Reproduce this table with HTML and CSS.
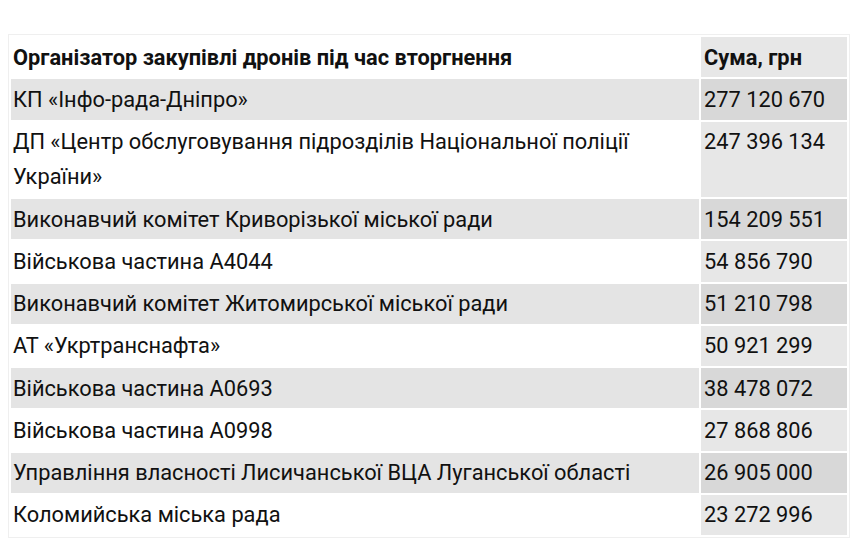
FILE: index.html
```html
<!DOCTYPE html>
<html lang="uk">
<head>
<meta charset="utf-8">
<link rel="stylesheet" href="styles.css">
</head>
<body>
<table class="tbl">
  <thead>
    <tr><th class="c1">Організатор закупівлі дронів під час вторгнення</th><th class="c2">Сума, грн</th></tr>
  </thead>
  <tbody>
    <tr><td class="c1">КП «Інфо-рада-Дніпро»</td><td class="c2">277 120 670</td></tr>
    <tr><td class="c1">ДП «Центр обслуговування підрозділів Національної поліції України»</td><td class="c2">247 396 134</td></tr>
    <tr><td class="c1">Виконавчий комітет Криворізької міської ради</td><td class="c2">154 209 551</td></tr>
    <tr><td class="c1">Військова частина А4044</td><td class="c2">54 856 790</td></tr>
    <tr><td class="c1">Виконавчий комітет Житомирської міської ради</td><td class="c2">51 210 798</td></tr>
    <tr><td class="c1">АТ «Укртранснафта»</td><td class="c2">50 921 299</td></tr>
    <tr><td class="c1">Військова частина А0693</td><td class="c2">38 478 072</td></tr>
    <tr><td class="c1">Військова частина А0998</td><td class="c2">27 868 806</td></tr>
    <tr><td class="c1">Управління власності Лисичанської ВЦА Луганської області</td><td class="c2">26 905 000</td></tr>
    <tr><td class="c1">Коломийська міська рада</td><td class="c2">23 272 996</td></tr>
  </tbody>
</table>
</body>
</html>
```

FILE: styles.css
```css
html, body {
  margin: 0;
  padding: 0;
  background: #ffffff;
}
body {
  font-family: Roboto, "Noto Sans", sans-serif;
  color: #111;
}
.tbl {
  margin: 34px 0 0 8px;
  width: 842px;
  border: 1px solid #efefef;
  border-collapse: separate;
  border-spacing: 2px;
  font-size: 21.8px;
  line-height: 35.25px;
}
.tbl th, .tbl td {
  text-align: left;
  vertical-align: top;
  padding: 2.5px 2px 2.5px 2px;
}
.tbl th {
  font-weight: 700;
}
.tbl .c2 {
  width: 140px;
  padding-left: 3px;
  padding-right: 3px;
  background: #e7e7e7;
}
.tbl tbody tr:nth-child(odd) .c1 {
  background: #e4e4e4;
}
.tbl tbody tr:nth-child(odd) .c2 {
  background: #d8d8d8;
}
.tbl th.c1 {
  background: #ffffff;
}
```
